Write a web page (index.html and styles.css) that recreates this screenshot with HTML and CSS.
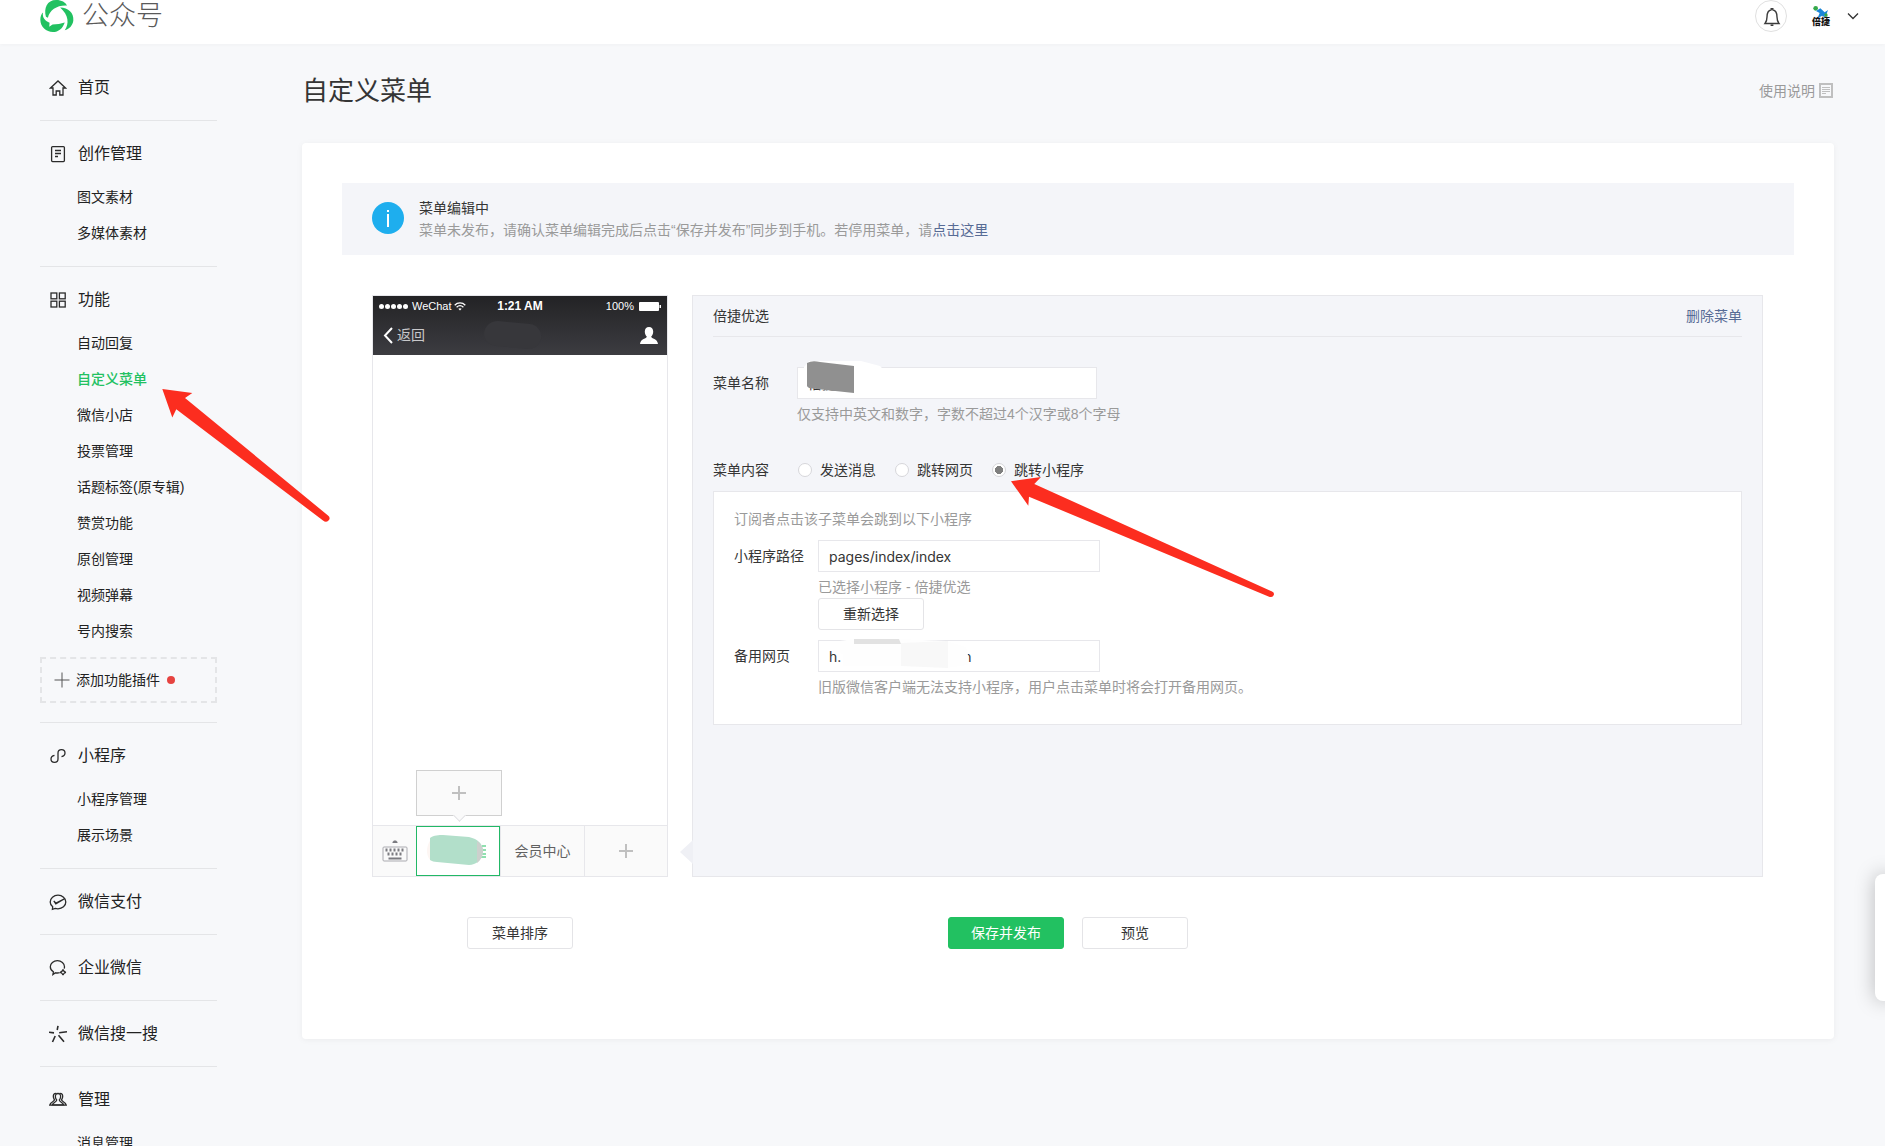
FILE: index.html
```html
<!DOCTYPE html>
<html lang="zh-CN">
<head>
<meta charset="utf-8">
<title>公众号</title>
<link rel="stylesheet" href="styles.css">
</head>
<body>
<div class="shell">
  <header class="topbar">
    <a class="brand" href="#">
      <svg class="brand-mark" viewBox="120 0 101 97" fill="#22c161"><path d="M137 51C130 25 140 0 168 0C185 0 196 7 201 17C172 15 148 30 143 54Z"/><path d="M180 23C205 23 222 40 220 62C218 78 207 88 194 92C208 72 206 46 180 23Z"/><path d="M128 38C125 54 136 65 148 69L147 81L157 74C170 74 183 72 194 68C188 86 175 97 158 97C138 97 120 82 120 60C120 50 123 43 128 38Z"/></svg>
      <span>公众号</span>
    </a>
    <div class="account">
      <button class="bell" type="button" aria-label="通知">
        <svg width="32" height="32" viewBox="0 0 32 32" fill="none" stroke="#3c3c3c" stroke-width="1.4"><path d="M9 22.5h14c-1.600-2-2-3.500-2-6.500 0-3.500-1.500-6.500-4.200-7.200V7.600h-1.600v1.200C12.500 9.500 11 12.500 11 16c0 3-.4 4.500-2 6.500z"/><path d="M14.600 24.200h2.800" stroke-width="1.600"/></svg>
      </button>
      <button class="profile" type="button" aria-label="倍捷">
        <span class="avatar">
          <svg width="18" height="12" viewBox="0 0 54 36"><circle cx="11" cy="7" r="7" fill="#35a84a"/><path d="M12 15L25 7L38 19L48 12L43 26L37 28L48 38L30 29L16 38L23 21Z" fill="#1b86d8"/><circle cx="42" cy="27" r="5" fill="#35a84a"/></svg>
          <b>倍捷</b>
        </span>
        <svg width="12" height="8" viewBox="0 0 12 8" fill="none" stroke="#333" stroke-width="1.300"><path d="M1 1.500l5 5 5-5"/></svg>
      </button>
    </div>
  </header>

  <div class="layout">
    <nav class="sidebar">
      <section class="group">
        <a class="group-title" href="#"><svg viewBox="0 0 18 18"><path d="M1.500 9L9 2l7.500 7H14v7h-3.200v-4H7.200v4H4V9z"/></svg>首页</a>
      </section>
      <section class="group">
        <a class="group-title" href="#"><svg viewBox="0 0 18 18"><rect x="2.600" y="1.600" width="12.800" height="15" rx="1"/><path d="M6 5.500h6M6 8.500h6M6 11.500h3"/></svg>创作管理</a>
        <ul class="links"><li><a href="#">图文素材</a></li><li><a href="#">多媒体素材</a></li></ul>
      </section>
      <section class="group">
        <a class="group-title" href="#"><svg viewBox="0 0 18 18"><rect x="2" y="2" width="5.800" height="5.800"/><rect x="10.400" y="2" width="5.800" height="5.800"/><rect x="2" y="10.200" width="5.800" height="5.800"/><rect x="10.400" y="10.200" width="5.800" height="5.800"/></svg>功能</a>
        <ul class="links">
          <li><a href="#">自动回复</a></li>
          <li><a class="current" href="#">自定义菜单</a></li>
          <li><a href="#">微信小店</a></li>
          <li><a href="#">投票管理</a></li>
          <li><a href="#">话题标签(原专辑)</a></li>
          <li><a href="#">赞赏功能</a></li>
          <li><a href="#">原创管理</a></li>
          <li><a href="#">视频弹幕</a></li>
          <li><a href="#">号内搜索</a></li>
        </ul>
        <a class="add-plugin" href="#"><svg width="16" height="16" viewBox="0 0 16 16" stroke="#555" fill="none"><path d="M8 .5v15M.5 8h15"/></svg>添加功能插件<i class="dot"></i></a>
      </section>
      <section class="group">
        <a class="group-title" href="#"><svg viewBox="0 0 18 18"><path d="M5.500 8.300C3.300 8.800 2 10.300 2 12c0 1.900 1.500 3.300 3.500 3.300S9 13.900 9 12V6c0-1.900 1.500-3.300 3.500-3.300S16 4.100 16 6c0 1.700-1.300 3.200-3.500 3.700"/></svg>小程序</a>
        <ul class="links"><li><a href="#">小程序管理</a></li><li><a href="#">展示场景</a></li></ul>
      </section>
      <section class="group">
        <a class="group-title" href="#"><svg viewBox="0 0 18 18"><path d="M3.700 13.800C2.200 12.600 1.200 10.900 1.200 9c0-3.800 3.500-6.800 7.800-6.800s7.800 3 7.800 6.800-3.500 6.800-7.800 6.800c-1 0-1.900-.1-2.800-.4l-2.800 1z"/><path d="M4.800 8l2 2.900L16 5.500 7 10.200z"/></svg>微信支付</a>
      </section>
      <section class="group">
        <a class="group-title" href="#"><svg viewBox="0 0 18 18"><path d="M15.200 9.600c.2-.6.300-1.200.3-1.900 0-3.400-3.200-6-7.100-6s-7.100 2.700-7.100 6c0 2.200 1.200 4 3.100 5.100l-.5 2.700 2.600-1.700c1.500.3 3 .2 4.200-.2"/><path d="M14 10.500c.4 1.600 1.200 2.400 2.900 2.800-1.700.4-2.500 1.200-2.900 2.900-.4-1.700-1.200-2.500-2.900-2.900 1.700-.4 2.500-1.200 2.900-2.800z"/></svg>企业微信</a>
      </section>
      <section class="group">
        <a class="group-title" href="#"><svg viewBox="0 0 18 18"><path d="M9 .8L8.200 5M0 7.200l5 .7M18 6.800l-7.800.9M6.200 11L3.500 17M9.500 10.200l5.500 6.500" stroke-width="1.600"/></svg>微信搜一搜</a>
      </section>
      <section class="group">
        <a class="group-title" href="#"><svg viewBox="0 0 18 18"><path d="M9 2.500C7 2.500 6.200 4 6.400 6c.1 1.500.8 2.300 1.300 3 0 2-3.700 2.400-4.400 4.900h11.400c-.7-2.500-4.400-2.900-4.400-4.900.5-.7 1.200-1.500 1.300-3 .2-2-.6-3.500-2.600-3.500z"/><path d="M7.200 2.300C4.800 2.200 4.100 4 4.400 6.200c.2 1.300.8 1.900 1.100 2.700-.4 1.800-4.100 2-4.800 5.300h16.600c-.7-3.300-4.400-3.500-4.800-5.300.3-.8.9-1.400 1.100-2.700.3-2.200-.4-4-2.800-3.900"/></svg>管理</a>
        <ul class="links"><li><a href="#">消息管理</a></li></ul>
      </section>
    </nav>

    <main class="main">
      <div class="page-head">
        <h1>自定义菜单</h1>
        <a class="help" href="#">使用说明<svg width="14" height="15" viewBox="0 0 14 15" fill="none" stroke="#bfbfbf"><rect x="1" y="1" width="12" height="13" stroke-width="2"/><path d="M3 4.500h8M3 6.500h8M3 8.500h8M3 10.500h4"/></svg></a>
      </div>

      <div class="card">
        <div class="notice">
          <svg width="32" height="32" viewBox="0 0 32 32"><circle cx="16" cy="16" r="16" fill="#1eaeee"/><path d="M15 8h2v2h-2zM15 12h2v13h-2z" fill="#fff"/></svg>
          <div>
            <p class="notice-title">菜单编辑中</p>
            <p class="muted">菜单未发布，请确认菜单编辑完成后点击“保存并发布”同步到手机。若停用菜单，请<a href="#">点击这里</a></p>
          </div>
        </div>

        <div class="workspace">
          <div class="phone">
            <div class="phone-head">
              <div class="status">
                <span class="carrier"><i></i><i></i><i></i><i></i><i></i><span>WeChat</span>
                  <svg width="12" height="9" viewBox="0 0 12 9" fill="none" stroke="#fff" stroke-width="1.300"><path d="M.7 3.200c3-3 7.600-3 10.600 0M2.600 5.200c2-1.900 4.800-1.900 6.800 0"/><path d="M4.300 6.800L6 8.600l1.700-1.800c-1-.9-2.400-.9-3.400 0z" fill="#fff" stroke="none"/></svg></span>
                <b>1:21 AM</b>
                <span class="power">100%<svg width="22" height="9" viewBox="0 0 22 9" fill="#fff"><rect width="20" height="9" rx="1"/><path d="M20.500 3h1.500v3h-1.500z"/></svg></span>
              </div>
              <div class="navbar">
                <span class="back"><svg width="10" height="17" viewBox="0 0 10 17" fill="none" stroke="#fff" stroke-width="2"><path d="M9 1L2 8.500 9 16"/></svg>返回</span>
                <svg width="58" height="28" viewBox="0 0 58 28"><path d="M14 0L46 3C54 4 58 11 57 18C55 25 50 28 43 28L12 25C4 24 0 19 0 12C1 5 6 0 14 0Z" fill="#37373b"/></svg>
                <svg class="person" width="18" height="17" viewBox="0 0 18 17" fill="#fff"><path d="M9 0c2.700 0 4.200 2 4.200 4.600 0 2.400-.9 4-2 5 0 2.400 6.300 2 6.800 7.400H0c.5-5.400 6.800-5 6.800-7.400-1.100-1-2-2.600-2-5C4.800 2 6.300 0 9 0z"/></svg>
              </div>
            </div>
            <div class="screen"></div>
            <div class="menubar">
              <span class="keyboard"><svg width="26" height="22" viewBox="0 0 26 22"><path d="M10.500 3v-1l1.500-1.500h2l1.500 1.500v1z" fill="#7b7b80"/><rect x="1" y="7" width="24" height="14" rx="1" fill="none" stroke="#aaaab0"/><path d="M3.500 10h19" stroke="#7b7b80" stroke-width="3" stroke-dasharray="2 2"/><path d="M5.500 14h15" stroke="#7b7b80" stroke-width="3" stroke-dasharray="2 2"/><path d="M6.500 18.500h13" stroke="#7b7b80" stroke-width="2"/></svg></span>
              <div class="tab active">
                <button type="button" aria-label="倍捷优选"><svg width="64" height="32" viewBox="0 0 64 32"><path d="M56 12h4M57 16h3M56 20h4M55 23h5" stroke="#22c161" fill="none"/><path d="M8 3C4 5 1 11 1 17C1 22 3 26 6 27Z" fill="#fdf6f3"/><path d="M4 4C8 1 13 1 17 1L43 3C52 5 57 10 57 17C56 26 50 31 43 31L11 28C8 28 6 27 4 26Z" fill="#b2dfca"/><path d="M51 7C55 10 57 13 57 17C57 22 55 26 51 29Z" fill="#ccd0cd"/></svg></button>
                <button class="submenu" type="button" aria-label="添加子菜单"><i class="plus"></i></button>
              </div>
              <div class="tab"><button type="button">会员中心</button></div>
              <div class="tab"><button type="button" aria-label="添加菜单"><i class="plus"></i></button></div>
            </div>
          </div>

          <form class="panel">
            <div class="panel-head"><span>倍捷优选</span><a href="#">删除菜单</a></div>
            <div class="field">
              <label for="menu-name">菜单名称</label>
              <div class="control">
                <div class="masked wide">
                  <input id="menu-name" type="text" value="倍捷优选">
                  <svg class="mask name-mask" width="82" height="36" viewBox="0 0 82 36"><path d="M1 6L6 0H58L77 5L82 10V30L50 36L45 28H23L1 24Z" fill="#fff"/><path d="M4 29.500H51V36H4Z" fill="#fff"/><path d="M4 2Q9 -1 17 1L51 5V32L9 27.500Q5 27 4 25Z" fill="#909090"/></svg>
                </div>
                <p class="muted hint">仅支持中英文和数字，字数不超过4个汉字或8个字母</p>
              </div>
            </div>
            <div class="field choice" role="radiogroup" aria-label="菜单内容">
              <span>菜单内容</span>
              <div class="radios">
                <label><input type="radio" name="kind">发送消息</label>
                <label><input type="radio" name="kind">跳转网页</label>
                <label><input type="radio" name="kind" checked>跳转小程序</label>
              </div>
            </div>
            <div class="box">
              <p class="muted">订阅者点击该子菜单会跳到以下小程序</p>
              <div class="field">
                <label for="path">小程序路径</label>
                <div class="control">
                  <input id="path" type="text" value="pages/index/index">
                  <p class="muted hint">已选择小程序 - 倍捷优选</p>
                  <button class="btn" type="button">重新选择</button>
                </div>
              </div>
              <div class="field">
                <label for="fallback">备用网页</label>
                <div class="control">
                  <div class="masked">
                    <input id="fallback" type="text" value="h.&nbsp;&nbsp;&nbsp;&nbsp;&nbsp;&nbsp;&nbsp;&nbsp;&nbsp;&nbsp;&nbsp;&nbsp;&nbsp;&nbsp;&nbsp;&nbsp;&nbsp;&nbsp;&nbsp;&nbsp;&nbsp;&nbsp;&nbsp;&nbsp;&nbsp;&nbsp;&nbsp;&nbsp;&nbsp;&nbsp;&nbsp;n">
                    <svg class="mask url-mask" width="134" height="30" viewBox="0 0 134 30"><path d="M4 2L18 0H63L110 2L130 8L132 16V26L110 29L63 27H7V16L4 12Z" fill="#fefefe"/><path d="M18 0H63L65 5H18Z" fill="#e2e2e2"/><path d="M65 4L112 2V29L65 27Z" fill="#f8f8f8"/></svg>
                  </div>
                  <p class="muted hint">旧版微信客户端无法支持小程序，用户点击菜单时将会打开备用网页。</p>
                </div>
              </div>
            </div>
          </form>
        </div>

        <div class="actions">
          <div class="sort"><button class="btn" type="button">菜单排序</button></div>
          <div class="submit"><button class="btn primary" type="button">保存并发布</button><button class="btn" type="button">预览</button></div>
        </div>
      </div>
    </main>
  </div>

  <aside class="drawer"></aside>
  <svg class="pointer first" width="168" height="134" viewBox="162 388 168 134" fill="#fc2d1f"><path d="M162.300 389L192.300 393L185 398L328 515.500Q331 518 328.500 520.500Q326 523 323 520.500L176.300 409.300L172.300 417.600Z"/></svg>
  <svg class="pointer second" width="264" height="122" viewBox="1011 476 264 122" fill="#fc2d1f"><path d="M1011 481.300L1041 477L1034.300 484L1272 591.500Q1275 593 1273.500 595.500Q1272 598 1268.500 596.500L1029 496.700L1028.300 505.700Z"/></svg>
</div>
</body>
</html>
```
FILE: styles.css
```css
* { box-sizing: border-box; }

body {
  margin: 0;
  font: 14px/22px "Liberation Sans", "Noto Sans CJK SC", sans-serif;
  color: #353535;
  background: #f7f8fa;
}

p, h1, ul { margin: 0; padding: 0; font-weight: 400; }
ul { list-style: none; }
a { color: inherit; text-decoration: none; }
button, input { font: inherit; color: inherit; margin: 0; }
button { padding: 0; border: 0; background: none; }
svg { display: block; flex: none; }

.shell { position: relative; height: 100vh; overflow: hidden; }

.topbar {
  display: flex;
  justify-content: space-between;
  align-items: flex-start;
  height: 44px;
  padding: 0 26px 0 40px;
  background: #fff;
  box-shadow: 0 1px 4px rgba(0, 0, 0, .03);
}
.brand { display: flex; align-items: center; gap: 8px; height: 32px; font-size: 27px; line-height: 32px; color: #5a5a5a; }
.brand span { font-weight: 300; }
.brand-mark { width: 34px; height: 32px; }
.account { display: flex; gap: 21px; }
.bell { width: 32px; height: 32px; border: 1px solid #e0e0e0; border-radius: 50%; display: grid; place-items: center; }
.profile { display: flex; align-items: center; gap: 13px; height: 32px; }
.avatar { display: flex; flex-direction: column; align-items: center; width: 26px; font-size: 9px; line-height: 9px; color: #111; }
.avatar b { font-weight: 900; }

.layout { display: flex; gap: 85px; padding: 0 51px 0 40px; }

.sidebar { flex: 0 0 177px; padding-top: 11px; color: #222; }
.group { padding: 16px 0 15px; }
.group + .group { border-top: 1px solid #e4e5e7; }
.group-title { display: flex; align-items: center; gap: 11px; height: 34px; padding-left: 9px; font-size: 16px; }
.group-title svg { width: 18px; height: 18px; fill: none; stroke: #2b2b2b; stroke-width: 1.300; }
.links { margin-top: 8px; padding-left: 37px; line-height: 36px; }
.links a { display: block; }
.links .current { color: #22c161; font-weight: 500; }
.add-plugin { display: flex; align-items: center; gap: 6px; height: 46px; margin: 8px 0 4px; padding-left: 12px; border: 2px dashed #e4e5e7; }
.dot { width: 8px; height: 8px; margin-left: 1px; border-radius: 50%; background: #e64340; }

.main { flex: 1; min-width: 0; }
.page-head { display: flex; justify-content: space-between; align-items: center; height: 99px; padding: 0 1px 6px 0; }
.page-head h1 { font-size: 26px; line-height: 36px; }
.help { display: flex; align-items: center; gap: 4px; color: #9a9a9a; }

.card { padding: 40px 40px 90px; background: #fff; border-radius: 4px; box-shadow: 0 1px 6px rgba(0, 0, 0, .05); }
.muted { color: #9a9a9a; }
.muted a, .panel-head a { color: #576b95; }

.notice { display: flex; gap: 15px; padding: 14px 30px; background: #f4f5f9; }
.notice > svg { margin-top: 5px; }

.workspace { display: flex; gap: 24px; margin: 40px 31px 0 30px; }

.phone { display: flex; flex-direction: column; flex: 0 0 296px; height: 582px; border: 1px solid #e7e7eb; }
.phone-head { height: 59px; padding: 0 6px; background: linear-gradient(#232325, #3c3c41); color: #fff; }
.status { display: grid; grid-template-columns: 1fr auto 1fr; align-items: center; height: 20px; font: 11px/20px "Liberation Sans", sans-serif; }
.status b { font-size: 12px; }
.carrier { display: flex; align-items: center; gap: 1px; }
.carrier i { width: 5px; height: 5px; border-radius: 50%; background: #fff; }
.carrier span { margin: 0 1px 0 3px; }
.power { display: flex; align-items: center; justify-content: flex-end; gap: 5px; }
.navbar { display: flex; align-items: center; height: 38px; padding: 0 3px 0 4px; }
.back { display: flex; align-items: center; gap: 4px; width: 101px; color: #c8c8ca; }
.person { margin-left: auto; }
.screen { flex: 1; }
.menubar { display: flex; border-top: 1px solid #e7e7eb; background: #fafafa; }
.keyboard { display: grid; place-items: center; width: 43px; }
.tab { position: relative; flex: 1; height: 50px; }
.tab > button:first-child { display: grid; place-items: center; width: 100%; height: 50px; color: #616161; }
.tab + .tab { border-left: 1px solid #e7e7eb; }
.tab.active { background: #fff; border: 1px solid #22b866; }
.tab.active > button:first-child { height: 48px; padding-bottom: 2px; }
.plus { position: relative; width: 14px; height: 14px; background: linear-gradient(#c0c0c0, #c0c0c0) 50% / 14px 2px no-repeat, linear-gradient(#c0c0c0, #c0c0c0) 50% / 2px 14px no-repeat; }
.submenu { position: absolute; left: -1px; bottom: 59px; display: grid; place-items: center; width: 86px; height: 46px; border: 1px solid #d0d0d0; background: #fafafa; }
.submenu::after { content: ""; position: absolute; left: 38px; bottom: -5px; width: 8px; height: 8px; border: solid #e0e0e3; border-width: 0 1px 1px 0; background: #fafafa; transform: rotate(45deg); }

.panel { position: relative; flex: 1; min-width: 0; padding: 0 20px; border: 1px solid #e7e7eb; background: #f4f5f9; }
.panel::before { content: ""; position: absolute; left: -13px; bottom: 12px; width: 13px; height: 24px; background: #eff0f5; clip-path: polygon(0 50%, 100% 0, 100% 100%); }
.panel-head { display: flex; justify-content: space-between; height: 41px; margin-bottom: 30px; border-bottom: 1px solid #e7e7eb; line-height: 40px; }
.field { display: flex; }
.field > :first-child { flex: 0 0 84px; line-height: 32px; }
.control { flex: 1; min-width: 0; }
.control input { display: block; width: 282px; height: 32px; padding: 0 10px; border: 1px solid #e7e7eb; border-radius: 0; background: #fff; font-family: Inter, "Noto Sans CJK SC", sans-serif; }
.masked { position: relative; }
.masked.wide input { width: 300px; }
.mask { position: absolute; pointer-events: none; }
.name-mask { left: 6px; top: -6px; }
.url-mask { left: 18px; top: -1px; }
.hint { margin-top: 4px; }
.choice { margin: 34px 0 10px; }
.choice > :first-child { flex-basis: 85px; line-height: 22px; }
.radios { display: flex; gap: 19px; }
.radios label { display: flex; align-items: center; gap: 8px; }
.radios input { appearance: none; width: 14px; height: 14px; border: 1px solid #d6d6da; border-radius: 50%; background: #fff; }
.radios input:checked { background: radial-gradient(circle, #7f7f7f 3px, #7f7f7f 4px, #fff 4px); }
.box { padding: 16px 20px 26px; border: 1px solid #e7e7eb; background: #fff; }
.box .field { margin-top: 10px; }

.btn { display: inline-block; vertical-align: top; min-width: 106px; height: 32px; padding: 0 20px; border: 1px solid #e4e4e7; border-radius: 3px; background: #fff; line-height: 30px; }
.btn.primary { min-width: 116px; border-color: #22c161; background: #22c161; color: #fff; }

.actions { display: grid; grid-template-columns: 1fr auto 1fr; margin: 40px 30px 0; }
.sort { width: 296px; text-align: center; }
.submit { display: flex; gap: 18px; }

.drawer { position: absolute; right: -10px; top: 874px; width: 20px; height: 127px; border-radius: 8px; background: #fff; box-shadow: 0 0 20px rgba(0, 0, 0, .25); }

.pointer { position: absolute; pointer-events: none; }
.first { left: 162px; top: 388px; }
.second { left: 1011px; top: 476px; }
```
